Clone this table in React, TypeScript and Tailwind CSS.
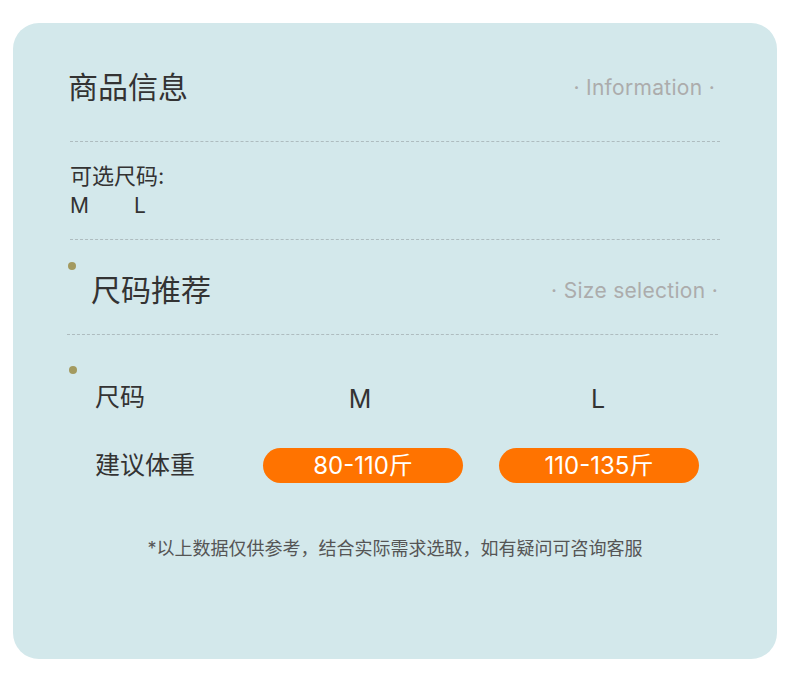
import React from "react";

const font = { fontFamily: "Inter, 'Noto Sans CJK SC', sans-serif" };

export default function App() {
  return (
    <div className="w-[790px] h-[691px] bg-white pt-[23px] pl-[13px]" style={font}>
      <div className="w-[764px] h-[636px] rounded-[26px] bg-[#d3e8eb] flex flex-col">
        {/* Section 1 header */}
        <div className="mt-[46px] ml-[55px] mr-[62px] h-[36px] flex items-center justify-between">
          <div className="text-[30px] leading-none text-[#333]">商品信息</div>
          <div className="text-[21px] leading-none text-[#acacac] tracking-[0.3px]">· Information ·</div>
        </div>
        <div className="mt-[36px] mx-[57px] border-t border-dashed border-[#aebcbf]" />
        <div className="mt-[19px] ml-[57px] text-[22px] leading-[30px] text-[#333]">
          <div>可选尺码:</div>
          <div className="flex text-[21px]">
            <span className="w-[64px]">M</span>
            <span>L</span>
          </div>
        </div>
        <div className="mt-[18px] mx-[57px] border-t border-dashed border-[#aebcbf]" />

        {/* Section 2 */}
        <div className="mt-[22px] ml-[55px] w-[8px] h-[8px] rounded-full bg-[#a39a5f]" />
        <div className="mt-[2px] ml-[78px] mr-[59px] h-[36px] flex items-center justify-between">
          <div className="text-[30px] leading-none text-[#333]">尺码推荐</div>
          <div className="text-[21px] leading-none text-[#acacac] tracking-[0.3px]">· Size selection ·</div>
        </div>
        <div className="mt-[26px] ml-[54px] mr-[59px] border-t border-dashed border-[#aebcbf]" />

        <div className="mt-[31px] ml-[56px] w-[8px] h-[8px] rounded-full bg-[#a39a5f]" />
        <div className="ml-[82px] grid grid-cols-[132px_200px_200px] gap-x-[36px]">
          <div className="mt-[6px] h-[36px] flex items-center text-[25px] text-[#333]">尺码</div>
          <div className="mt-[6px] h-[36px] flex items-center justify-center text-[25px] text-[#333] pt-[4px] pr-[6px]">M</div>
          <div className="mt-[6px] h-[36px] flex items-center justify-center text-[25px] text-[#333] pt-[4px] pr-[2px]">L</div>

          <div className="mt-[32px] h-[35px] flex items-center text-[25px] text-[#333]">建议体重</div>
          <div className="mt-[32px] h-[35px] rounded-full bg-[#ff7300] flex items-center justify-center text-[24px] text-white">80-110斤</div>
          <div className="mt-[32px] h-[35px] rounded-full bg-[#ff7300] flex items-center justify-center text-[24px] text-white">110-135斤</div>
        </div>

        <div className="mt-[53px] text-center text-[18px] leading-[26px] text-[#555]">
          *以上数据仅供参考，结合实际需求选取，如有疑问可咨询客服
        </div>
      </div>
    </div>
  );
}
